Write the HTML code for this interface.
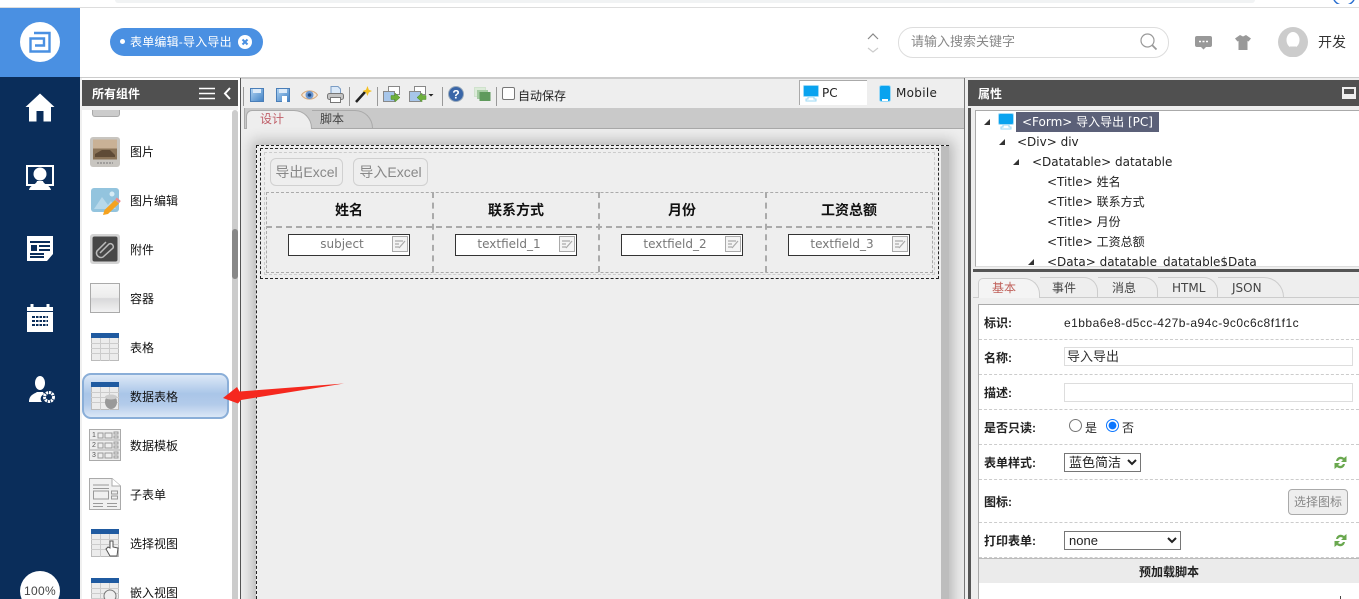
<!DOCTYPE html>
<html lang="zh"><head><meta charset="utf-8"><title>表单编辑</title>
<style>
html,body{margin:0;padding:0;width:1359px;height:599px;overflow:hidden;background:#fff}
body{position:relative;font:12px "Liberation Sans","Noto Sans CJK SC",sans-serif;color:#222}
.a,.l,.t{position:absolute}
.a svg{display:block}
.l{left:130px;line-height:16px;color:#111;white-space:nowrap;margin-top:1px}
.t{white-space:nowrap;line-height:16px}
.sep{position:absolute;top:87px;width:1px;height:19px;background:#999}
.th{position:absolute;top:202px;font-weight:bold;font-size:14px;color:#111;line-height:16px;text-align:center;width:166px}
.inp{position:absolute;top:234px;width:120px;height:20px;border:1px solid #333;background:#fff;color:#777;text-align:center;line-height:18px;box-sizing:content-box;font-family:"DejaVu Sans",sans-serif}
.inp span{display:block;width:106px}
.inp svg{position:absolute;right:1px;top:1px}
.lb{position:absolute;left:984px;font-weight:bold;color:#222;line-height:16px;white-space:nowrap}
.dl{position:absolute;left:979px;right:0;border-top:1px dashed #ccc;height:0}
.tr{position:absolute;white-space:nowrap;color:#222;line-height:16px;font-family:"DejaVu Sans","Noto Sans CJK SC",sans-serif}
.ar{position:absolute;width:0;height:0;border-left:6px solid transparent;border-bottom:6px solid #333}
.btn{position:absolute;top:158px;height:26px;border:1px solid #d0d0d0;border-radius:6px;color:#888;font-size:14px;line-height:26px;text-align:center;background:#eee}
.tab{position:absolute;top:277px;height:21px;line-height:20px;color:#444;border:1px solid #ccc;border-bottom:0;border-left:0;border-radius:0 14px 0 0;box-sizing:border-box;padding-left:14px;font-family:"DejaVu Sans","Noto Sans CJK SC",sans-serif}
</style></head><body>

<!-- top strip -->
<div class="a" style="left:115px;top:0;width:1140px;height:3px;background:#f1f3f4;border-radius:0 0 8px 8px"></div>
<div class="a" style="left:0;top:7px;width:1359px;height:1px;background:#ddd"></div>
<div class="a" style="left:1333px;top:0"><svg width="26" height="4"><path d="M1 0a12 12 0 0 0 20 0" fill="none" stroke="#2a6fd0" stroke-width="1.500"/></svg></div>

<!-- logo + nav -->
<div class="a" style="left:0;top:8px;width:80px;height:69px;background:#4a90e2"></div>
<div class="a" style="left:20px;top:22px;width:40px;height:40px;border-radius:50%;background:#fff"></div>
<div class="a" style="left:29px;top:31px"><svg width="22" height="22" fill="none" stroke="#4a90e2" stroke-width="2.400"><path d="M5 2H20.500V20.500H1.500V7.500H15V14.500H6"/></svg></div>
<div class="a" style="left:0;top:77px;width:80px;height:522px;background:#0a2d5a"></div>
<div class="a" style="left:25px;top:93px"><svg width="30" height="29" fill="#fff"><path d="M15 0.500 29.500 14H26V28.500H18.500V18H11.500V28.500H4V14H0.500Z"/></svg></div>
<div class="a" style="left:26px;top:165px"><svg width="28" height="26"><path d="M1 1H27V20H1Z" fill="none" stroke="#fff" stroke-width="2"/><circle cx="14" cy="9" r="6.500" fill="#fff"/><path d="M3 25c1-5 7-5 8-9h6c1 4 7 4 8 9Z" fill="#fff"/></svg></div>
<div class="a" style="left:27px;top:235px"><svg width="26" height="27"><path d="M0 1H26V19L20 26H0Z" fill="#fff"/><path d="M3 6H23V8H3ZM12 10H23V12H12ZM12 14H23V16H12ZM3 18H17V20H3ZM3 21H17V23H3Z" fill="#0a2d5a"/><rect x="4" y="10" width="6" height="6" fill="#0a2d5a"/></svg></div>
<div class="a" style="left:26px;top:303px"><svg width="28" height="29"><path d="M1 4H27V29H1Z" fill="#fff"/><path d="M6 1V7M22 1V7" stroke="#fff" stroke-width="3"/><path d="M1 8.500H27" stroke="#0a2d5a"/><path d="M6 13h16v2H6zM6 17h16v2H6zM6 21h16v2H6z" fill="#0a2d5a"/><path d="M9.500 12.500v11M13 12.500v11M16.500 12.500v11M20 12.500v11" stroke="#fff"/></svg></div>
<div class="a" style="left:28px;top:375px"><svg width="28" height="30" fill="#fff"><ellipse cx="12" cy="8" rx="5" ry="7"/><path d="M1 27c0-7 5-8 8-10h6l1 2c-4 2-4 6-2 8Z"/><circle cx="21" cy="22" r="4.500" fill="none" stroke="#fff" stroke-width="3" stroke-dasharray="2.200 .8"/></svg></div>
<div class="a" style="left:20px;top:571px;width:40px;height:40px;border-radius:50%;background:#fff;color:#444;text-align:center;line-height:41px;font-size:12px;letter-spacing:.3px">100%</div>

<!-- header -->
<div class="a" style="left:80px;top:77px;width:1279px;height:1px;background:#ccc"></div>
<div class="a" style="left:110px;top:28px;width:153px;height:28px;background:#4a90e2;border-radius:14px"></div>
<div class="a" style="left:120px;top:39px;width:5px;height:5px;border-radius:50%;background:#fff"></div>
<div class="t" style="left:130px;top:34px;color:#fff;letter-spacing:.2px">表单编辑-导入导出</div>
<div class="a" style="left:238px;top:35px;width:14px;height:14px;border-radius:50%;background:#fff"></div>
<div class="a" style="left:238px;top:35px"><svg width="14" height="14"><path d="M4.500 4.500 9.500 9.500M9.500 4.500 4.500 9.500" stroke="#4a90e2" stroke-width="2"/></svg></div>
<div class="a" style="left:866px;top:31px"><svg width="14" height="24" fill="none"><path d="M2 8 7 3 12 8" stroke="#888" stroke-width="1.200"/><path d="M2 17 7 21 12 17" stroke="#ccc" stroke-width="1.200"/></svg></div>
<div class="a" style="left:898px;top:27px;width:269px;height:29px;border:1px solid #ddd;border-radius:15px"></div>
<div class="t" style="left:911px;top:34px;color:#888;font-size:13px">请输入搜索关键字</div>
<div class="a" style="left:1140px;top:33px"><svg width="18" height="18" fill="none" stroke="#999" stroke-width="1.200"><circle cx="7.500" cy="7.500" r="6.500"/><path d="M12 12 16.500 16.500" stroke-width="1.800"/></svg></div>
<div class="a" style="left:1195px;top:36px"><svg width="17" height="14"><path d="M2 0H15a2 2 0 0 1 2 2V9a2 2 0 0 1-2 2H11L8.500 13.500 6 11H2a2 2 0 0 1-2-2V2a2 2 0 0 1 2-2Z" fill="#999"/><path d="M4 5.500h2M7.500 5.500h2M11 5.500h2" stroke="#fff" stroke-width="1.500"/></svg></div>
<div class="a" style="left:1235px;top:35px"><svg width="16" height="15"><path d="M5 0 8 1.500 11 0 16 3.500 13.500 6.500 12.500 6V15H3.500V6L2.500 6.500 0 3.500Z" fill="#999"/></svg></div>
<div class="a" style="left:1278px;top:27px"><svg width="30" height="30"><circle cx="15" cy="15" r="15" fill="#ccc"/><ellipse cx="15" cy="13" rx="6.500" ry="8" fill="#fff"/><path d="M12 19.500V22L5 26.500A15 15 0 0 0 25 26.500L18 22V19.500Z" fill="#ccc"/></svg></div>
<div class="t" style="left:1318px;top:34px;font-size:14px;color:#333">开发</div>

<!-- left component panel -->
<div class="a" style="left:80px;top:78px;width:160px;height:521px;background:#fff"></div>
<div class="a" style="left:80px;top:78px;width:2px;height:521px;background:#f0f0f0"></div>
<div class="a" style="left:82px;top:80px;width:156px;height:26px;background:#505050"></div>
<div class="a" style="left:82px;top:106px;width:156px;height:4px;background:#eee"></div>
<div class="t" style="left:92px;top:86px;color:#fff;font-weight:bold">所有组件</div>
<div class="a" style="left:199px;top:87px"><svg width="36" height="13" fill="none" stroke="#fff"><path d="M0 1.500H16M0 6.500H16M0 11.500H16" stroke-width="1.400"/><path d="M31 1 26 6.500 31 12" stroke-width="2"/></svg></div>
<div class="a" style="left:232px;top:110px;width:6px;height:489px;background:#ccc;border-radius:3px 3px 0 0"></div>
<div class="a" style="left:232px;top:229px;width:6px;height:50px;background:#888;border-radius:3px"></div>

<div class="a" style="left:92px;top:110px;width:28px;height:7px;background:#ccc;border:1px solid #aaa;border-top:0;box-sizing:border-box;border-radius:0 0 3px 3px"></div>
<!-- 图片 -->
<div class="a" style="left:90px;top:137px"><svg width="30" height="30"><rect width="30" height="30" rx="3" fill="#c8c5c0"/><rect x="3" y="2.500" width="24" height="20" fill="#8a7358"/><rect x="3" y="2.500" width="24" height="9" fill="#c9b196"/><path d="M5 17 12 13 20 13 25 18V20H5Z" fill="#5e4a36"/><path d="M7 26H23" stroke="#777" stroke-dasharray="2 1"/></svg></div>
<div class="l" style="top:143px">图片</div>
<!-- 图片编辑 -->
<div class="a" style="left:91px;top:188px"><svg width="30" height="28"><rect width="28" height="24" rx="3" fill="#93c4de"/><path d="M3 21 11 9 17 17 20 13 25 21Z" fill="#b7d8ea"/><circle cx="21" cy="6" r="2.500" fill="#d8ecf5"/><path d="M12 27 13.500 22 24 12 28 15.500 17 26Z" fill="#f5a21f"/><path d="M25 10.500 29 14" stroke="#e88" stroke-width="2.500"/></svg></div>
<div class="l" style="top:192px">图片编辑</div>
<!-- 附件 -->
<div class="a" style="left:90px;top:234px"><svg width="30" height="30"><rect width="30" height="30" rx="3" fill="#d4d4d4"/><rect x="2.500" y="2.500" width="25" height="25" rx="2" fill="#474747"/><path d="M10 19 19 10a3 3 0 0 1 4 4L13 23a4.500 4.500 0 0 1-6-6L16 8" fill="none" stroke="#bbb" stroke-width="1.500"/></svg></div>
<div class="l" style="top:241px">附件</div>
<!-- 容器 -->
<div class="a" style="left:90px;top:283px;width:30px;height:30px;box-sizing:border-box;border:1px solid #aaa;background:linear-gradient(#f6f6f6 0,#ececec 48%,#d8d8da 52%,#f2f2f2 100%)"></div>
<div class="l" style="top:290px">容器</div>
<!-- 表格 -->
<div class="a" style="left:91px;top:333px"><svg width="28" height="28"><use href="#tb"/></svg></div>
<svg width="0" height="0" style="position:absolute"><defs><g id="tb"><rect width="28" height="28" fill="#ececec"/><rect width="28" height="5" fill="#1f5aa0"/><path d="M.5 5V27.500H27.500V5" fill="none" stroke="#bbb"/><path d="M0 10.500H28M0 15.500H28M0 20.500H28M9.500 5V28M18.500 5V28" stroke="#ccc"/></g></defs></svg>
<div class="l" style="top:339px">表格</div>
<!-- 数据表格 selected -->
<div class="a" style="left:82px;top:373px;width:147px;height:46px;box-sizing:border-box;border:2px solid #8aaed8;border-radius:9px;background:linear-gradient(#dde9f7,#a9c5e8 45%,#b3cbea 70%,#dbe7f6)"></div>
<div class="a" style="left:91px;top:382px"><svg width="28" height="28"><use href="#tb"/><ellipse cx="20" cy="20" rx="6" ry="7" fill="#999"/><ellipse cx="20" cy="15" rx="6" ry="2.500" fill="#ccc"/></svg></div>
<div class="l" style="top:388px">数据表格</div>
<!-- 数据模板 -->
<div class="a" style="left:89px;top:429px"><svg width="32" height="32"><rect x=".5" y=".5" width="31" height="31" fill="#eee" stroke="#aaa"/><path d="M0 11H32M0 21H32" stroke="#aaa"/><g fill="none" stroke="#999"><path d="M9 4h5v5H9zM16 4h7v5h-7zM25 3h4v2h-4zM25 7h4v2h-4zM9 14h5v5H9zM16 14h7v5h-7zM25 13h4v2h-4zM25 17h4v2h-4zM9 24h5v5H9zM16 24h7v5h-7zM25 23h4v2h-4zM25 27h4v2h-4z"/></g></svg></div>
<div class="t" style="left:92px;top:431px;font-size:7px;line-height:10px;color:#555">1<br>2<br>3</div>
<div class="l" style="top:437px">数据模板</div>
<!-- 子表单 -->
<div class="a" style="left:89px;top:478px"><svg width="32" height="32"><path d="M.5.500H23L31.500 8V31.500H.5Z" fill="#f0f0f0" stroke="#aaa"/><path d="M23 .5V8H31.500" fill="#fff" stroke="#aaa"/><g fill="none" stroke="#999"><path d="M4 10.500H20M4 7H20M4 25.500H14M4 28.500H14M18 25.500H28M18 28.500H28"/><path d="M4.500 13h15v8h-15zM22.500 13h6v3h-6zM22.500 18h6v3h-6z" stroke-width="1"/></g></svg></div>
<div class="l" style="top:486px">子表单</div>
<!-- 选择视图 -->
<div class="a" style="left:91px;top:529px"><svg width="28" height="28"><use href="#tb"/><path d="M19 12v7l-2-1-2 2 4 7h7l1-8-5-1v-6Z" fill="#fff" stroke="#555"/></svg></div>
<div class="l" style="top:535px">选择视图</div>
<!-- 嵌入视图 -->
<div class="a" style="left:91px;top:578px"><svg width="28" height="28"><use href="#tb"/><circle cx="19" cy="18" r="6" fill="#eee" stroke="#777"/></svg></div>
<div class="l" style="top:584px">嵌入视图</div>

<!-- center -->
<div class="a" style="left:240px;top:78px;width:1px;height:521px;background:#555"></div>
<div class="a" style="left:241px;top:78px;width:724px;height:521px;background:#eee"></div>
<div class="a" style="left:241px;top:78px;width:724px;height:1px;background:#ccc"></div>
<div class="a" style="left:241px;top:108px;width:723px;height:20px;background:#c9c9c9;border-bottom:1px solid #aaa;box-sizing:content-box"></div>
<div class="a" style="left:241px;top:108px;width:3px;height:21px;background:#eee;border-right:1px solid #aaa"></div>

<!-- toolbar -->
<div class="sep" style="left:243px"></div>
<svg width="0" height="0" style="position:absolute"><defs><linearGradient id="bl" x2="1" y2="1"><stop offset="0" stop-color="#b4d6f4"/><stop offset="1" stop-color="#3f80c4"/></linearGradient></defs></svg>
<div class="a" style="left:250px;top:88px"><svg width="14" height="14"><rect x=".5" y=".5" width="13" height="13" fill="url(#bl)" stroke="#4a7eb8"/><rect x="3" y="1" width="8" height="4" fill="#dceaf8"/></svg></div>
<div class="a" style="left:276px;top:88px"><svg width="14" height="14"><rect x=".5" y=".5" width="13" height="13" fill="url(#bl)" stroke="#4a7eb8"/><rect x="3" y="1" width="8" height="4" fill="#dceaf8"/><rect x="6" y="8" width="5" height="6" fill="#fff"/></svg></div>
<div class="a" style="left:301px;top:88px"><svg width="17" height="14"><path d="M.5 7C4 1.500 13 1.500 16.500 7 13 12.500 4 12.500 .5 7Z" fill="#f3e6d8" stroke="#d8a878"/><circle cx="8.500" cy="7" r="4" fill="#6a96d0"/><circle cx="8.500" cy="7" r="1.800" fill="#234a80"/></svg></div>
<div class="a" style="left:327px;top:86px"><svg width="17" height="17"><path d="M4 .5H11L13.500 3V8H4Z" fill="#dbe9f8" stroke="#7a9cc4"/><rect x=".5" y="7.500" width="16" height="6" rx="2" fill="#c4c4c4" stroke="#777"/><rect x="3.500" y="11.500" width="10" height="5" fill="#fff" stroke="#777"/></svg></div>
<div class="sep" style="left:349px"></div>
<div class="a" style="left:355px;top:86px"><svg width="17" height="17"><path d="M1 16 10 6" stroke="#222" stroke-width="2.500"/><path d="M12.500 0 13.800 3.700 17 5 13.800 6.500 12.500 10 11 6.500 7.500 5 11 3.700Z" fill="#f4c020"/></svg></div>
<div class="sep" style="left:377px"></div>
<div class="a" style="left:383px;top:86px"><svg width="17" height="17"><rect x="5.500" y=".5" width="11" height="8" fill="#fff" stroke="#888"/><rect x=".5" y="5.500" width="11" height="10" fill="#a7c6ea" stroke="#888"/><path d="M8 9.500h4V7l5 4.500-5 4.500v-2.500H8Z" fill="#6eb03c" stroke="#4a8a2a" stroke-width=".5"/></svg></div>
<div class="a" style="left:409px;top:86px"><svg width="26" height="17"><rect x="5.500" y=".5" width="11" height="8" fill="#fff" stroke="#888"/><rect x=".5" y="5.500" width="11" height="10" fill="#a7c6ea" stroke="#888"/><path d="M17 9.500h-4V7l-5 4.500 5 4.500v-2.500h4Z" fill="#6eb03c" stroke="#4a8a2a" stroke-width=".5"/><path d="M19.500 8h5L22 10.500Z" fill="#222"/></svg></div>
<div class="sep" style="left:442px"></div>
<div class="a" style="left:448px;top:86px"><svg width="16" height="16"><circle cx="8" cy="8" r="7.500" fill="#3a66a8" stroke="#9ab"/><text x="8" y="12.500" font-family="Liberation Sans" font-size="12" font-weight="bold" text-anchor="middle" fill="#fff">?</text></svg></div>
<div class="a" style="left:474px;top:87px"><svg width="17" height="15"><rect x=".5" y=".5" width="11" height="9" fill="#dcebd9" stroke="#cfe2cc"/><rect x="3" y="3" width="11" height="9" fill="#a5cba2"/><rect x="5.500" y="5" width="11" height="9" fill="#5f9a5c"/></svg></div>
<div class="sep" style="left:496px"></div>
<div class="a" style="left:502px;top:87px;width:13px;height:13px;box-sizing:border-box;border:1px solid #777;border-radius:2px;background:#fff"></div>
<div class="t" style="left:518px;top:88px;color:#222">自动保存</div>

<div class="a" style="left:799px;top:80px;width:68px;height:25px;background:#fff;border-left:1px solid #aaa;border-top:1px solid #aaa;box-sizing:border-box"></div>
<div class="a" style="left:803px;top:85px"><svg width="16" height="17"><rect x=".5" y=".5" width="15" height="11" rx="1" fill="#09a3ef" stroke="#9ad8f6"/><path d="M5 12H11V14H13V16H3V14H5Z" fill="#fff" stroke="#9ad8f6"/></svg></div>
<div class="t" style="left:822px;top:85px;color:#222;font-family:'DejaVu Sans',sans-serif">PC</div>
<div class="a" style="left:879px;top:85px"><svg width="12" height="17"><rect x=".5" y=".5" width="11" height="16" rx="2" fill="#09a3ef" stroke="#9ad8f6"/><rect x="3" y="14" width="6" height="2" fill="#fff"/></svg></div>
<div class="t" style="left:896px;top:85px;color:#222;font-family:'DejaVu Sans',sans-serif;letter-spacing:.3px">Mobile</div>

<!-- design tabs -->
<div class="a" style="left:246px;top:110px;width:66px;height:19px;background:#eee;border:1px solid #aaa;border-bottom:0;border-radius:6px 18px 0 0;box-sizing:border-box"></div>
<div class="t" style="left:260px;top:111px;color:#c0606a">设计</div>
<div class="a" style="left:312px;top:110px;width:61px;height:18px;border:1px solid #aaa;border-bottom:0;border-left:0;border-radius:0 18px 0 0;box-sizing:border-box"></div>
<div class="t" style="left:320px;top:111px;color:#444">脚本</div>

<!-- canvas -->
<div class="a" style="left:256px;top:145px;width:693px;height:470px;background:#eee;box-shadow:0 0 13px 4px rgba(0,0,0,.24)"></div>
<div class="a" style="left:964px;top:78px;width:1px;height:521px;background:#777"></div>
<div class="a" style="left:941px;top:146px;width:8px;height:453px;background:#bdbdbd"></div>
<div class="a" style="left:256px;top:145px;width:693px;height:0;border-top:1px dashed #222"></div>
<div class="a" style="left:256px;top:145px;width:0;height:454px;border-left:1px dashed #222"></div>
<div class="a" style="left:260px;top:148px;width:677px;height:129px;border:1px dashed #222"></div>
<div class="a" style="left:264px;top:152px;width:669px;height:121px;border:1px dashed #ccc"></div>
<div class="btn" style="left:270px;width:71px">导出Excel</div>
<div class="btn" style="left:353px;width:73px">导入Excel</div>
<div class="a" style="left:266px;top:192px;width:665px;height:79px;border:1px dashed #aaa"></div>
<div class="a" style="left:266px;top:226px;width:666px;height:0;border-top:2px dashed #aaa"></div>
<div class="a" style="left:432px;top:192px;height:80px;border-left:2px dashed #aaa"></div>
<div class="a" style="left:598px;top:192px;height:80px;border-left:2px dashed #aaa"></div>
<div class="a" style="left:765px;top:192px;height:80px;border-left:2px dashed #aaa"></div>
<div class="th" style="left:266px">姓名</div>
<div class="th" style="left:433px">联系方式</div>
<div class="th" style="left:599px">月份</div>
<div class="th" style="left:766px">工资总额</div>
<div class="inp" style="left:288px"><span>subject</span><svg width="16" height="16"><rect x=".5" y=".5" width="15" height="15" fill="#f4f4f4" stroke="#aaa"/><path d="M3 5H11M3 8H7M3 11H7M7 12 13 5" stroke="#aaa" stroke-width="1.200"/></svg></div>
<div class="inp" style="left:455px"><span>textfield_1</span><svg width="16" height="16"><rect x=".5" y=".5" width="15" height="15" fill="#f4f4f4" stroke="#aaa"/><path d="M3 5H11M3 8H7M3 11H7M7 12 13 5" stroke="#aaa" stroke-width="1.200"/></svg></div>
<div class="inp" style="left:621px"><span>textfield_2</span><svg width="16" height="16"><rect x=".5" y=".5" width="15" height="15" fill="#f4f4f4" stroke="#aaa"/><path d="M3 5H11M3 8H7M3 11H7M7 12 13 5" stroke="#aaa" stroke-width="1.200"/></svg></div>
<div class="inp" style="left:788px"><span>textfield_3</span><svg width="16" height="16"><rect x=".5" y=".5" width="15" height="15" fill="#f4f4f4" stroke="#aaa"/><path d="M3 5H11M3 8H7M3 11H7M7 12 13 5" stroke="#aaa" stroke-width="1.200"/></svg></div>

<!-- red arrow -->
<div class="a" style="left:220px;top:380px"><svg width="126" height="26"><path d="M3 18 17 7 19.500 11.500 124 3.500 21 20 18 23.500Z" fill="#f5281e"/></svg></div>

<!-- right panel -->
<div class="a" style="left:965px;top:78px;width:394px;height:521px;background:#eee"></div>
<div class="a" style="left:968px;top:80px;width:391px;height:26px;background:#505050"></div>
<div class="t" style="left:978px;top:86px;color:#fff;font-weight:bold">属性</div>
<div class="a" style="left:1342px;top:87px;width:14px;height:12px;background:#eee"></div>
<div class="a" style="left:1344px;top:89px;width:10px;height:5px;background:#505050"></div>
<div class="a" style="left:968px;top:108px;width:3px;height:491px;background:#555"></div>
<div class="a" style="left:975px;top:110px;width:384px;height:157px;box-sizing:border-box;background:#fff;border:1px solid #aaa;border-right:0;border-bottom:1px solid #ddd"></div>
<div class="a" style="left:973px;top:269px;width:386px;height:3px;background:#555"></div>
<div class="ar" style="left:984px;top:119px"></div>
<div class="a" style="left:998px;top:113px"><svg width="17" height="18"><rect x=".5" y=".5" width="15" height="11" rx="1.500" fill="#09a3ef" stroke="#a8dcf6"/><path d="M5 12H11V14H13V16H3V14H5Z" fill="#fff" stroke="#9ad8f6"/></svg></div>
<div class="a" style="left:1016px;top:112px;width:143px;height:20px;background:#5b6078"></div>
<div class="tr" style="left:1022px;top:114px;color:#fff">&lt;Form&gt; 导入导出 [PC]</div>
<div class="ar" style="left:999px;top:139px"></div>
<div class="tr" style="left:1017px;top:134px">&lt;Div&gt; div</div>
<div class="ar" style="left:1013px;top:159px"></div>
<div class="tr" style="left:1032px;top:154px">&lt;Datatable&gt; datatable</div>
<div class="tr" style="left:1047px;top:174px">&lt;Title&gt; 姓名</div>
<div class="tr" style="left:1047px;top:194px">&lt;Title&gt; 联系方式</div>
<div class="tr" style="left:1047px;top:214px">&lt;Title&gt; 月份</div>
<div class="tr" style="left:1047px;top:234px">&lt;Title&gt; 工资总额</div>
<div class="a" style="left:976px;top:254px;width:383px;height:12px;overflow:hidden;background:#fff"><div class="tr" style="left:71px;top:0">&lt;Data&gt; datatable_datatable$Data</div></div>
<div class="ar" style="left:1028px;top:259px"></div>

<!-- property tabs -->
<div class="a" style="left:973px;top:297px;width:386px;height:1px;background:#ccc"></div>
<div class="a" style="left:978px;top:278px;width:62px;height:20px;box-sizing:border-box;background:#f4f4f4;border:1px solid #ccc;border-bottom:0;border-radius:5px 16px 0 0"></div>
<div class="tab" style="left:1040px;width:58px;padding-left:12px">事件</div>
<div class="tab" style="left:1098px;width:60px">消息</div>
<div class="tab" style="left:1158px;width:60px">HTML</div>
<div class="tab" style="left:1218px;width:66px;border-radius:0 20px 0 0">JSON</div>
<div class="t" style="left:992px;top:280px;color:#c0605a">基本</div>

<!-- properties -->
<div class="a" style="left:978px;top:304px;width:381px;height:295px;box-sizing:border-box;background:#fff;border-left:1px solid #aaa;border-top:1px solid #aaa"></div>
<div class="lb" style="top:315px">标识:</div>
<div class="t" style="left:1064px;top:315px;color:#222;letter-spacing:.47px">e1bba6e8-d5cc-427b-a94c-9c0c6c8f1f1c</div>
<div class="dl" style="top:339px"></div>
<div class="lb" style="top:350px">名称:</div>
<div class="a" style="left:1064px;top:347px;width:289px;height:19px;box-sizing:border-box;border:1px solid #ddd;padding-left:2px;line-height:18px;color:#333;font-size:13px">导入导出</div>
<div class="dl" style="top:374px"></div>
<div class="lb" style="top:385px">描述:</div>
<div class="a" style="left:1064px;top:383px;width:289px;height:19px;box-sizing:border-box;border:1px solid #ddd"></div>
<div class="dl" style="top:409px"></div>
<div class="lb" style="top:420px">是否只读:</div>
<input type="radio" name="r" style="position:absolute;left:1069px;top:419px;margin:0;width:13px;height:13px">
<div class="t" style="left:1085px;top:420px">是</div>
<input type="radio" name="r" checked style="position:absolute;left:1106px;top:419px;margin:0;width:13px;height:13px;accent-color:#0a75ff">
<div class="t" style="left:1122px;top:420px">否</div>
<div class="dl" style="top:444px"></div>
<div class="lb" style="top:455px">表单样式:</div>
<select style="position:absolute;left:1064px;top:453px;width:77px;height:19px;font:13px 'Liberation Sans','Noto Sans CJK SC',sans-serif;padding:0;background:#fff;color:#222"><option>蓝色简洁</option></select>
<div class="a" style="left:1334px;top:455px"><svg width="13" height="15" fill="#6aa84f"><path d="M2 6C3 1 8 1 10 3L12.500 1V7H7L9 5C7 3.500 5 4 4 6Z"/><path d="M11 9C10 14 5 14 3 12L.5 14V8H6L4 10C6 11.500 8 11 9 9Z"/></svg></div>
<div class="dl" style="top:479px"></div>
<div class="lb" style="top:494px">图标:</div>
<div class="a" style="left:1288px;top:489px;width:60px;height:26px;box-sizing:border-box;border:1px solid #aaa;border-radius:4px;background:#eee;color:#888;text-align:center;line-height:25px;font-size:12px">选择图标</div>
<div class="dl" style="top:522px"></div>
<div class="lb" style="top:533px">打印表单:</div>
<select style="position:absolute;left:1064px;top:531px;width:117px;height:19px;font:13px 'Liberation Sans','Noto Sans CJK SC',sans-serif;padding:0;background:#fff;color:#222"><option>none</option></select>
<div class="a" style="left:1334px;top:533px"><svg width="13" height="15" fill="#6aa84f"><path d="M2 6C3 1 8 1 10 3L12.500 1V7H7L9 5C7 3.500 5 4 4 6Z"/><path d="M11 9C10 14 5 14 3 12L.5 14V8H6L4 10C6 11.500 8 11 9 9Z"/></svg></div>
<div class="dl" style="top:557px"></div>
<div class="a" style="left:979px;top:558px;width:380px;height:25px;background:#ebebeb;border-top:1px solid #bbb;box-sizing:border-box;text-align:center;font-weight:bold;line-height:27px;color:#222">预加载脚本</div>
<div class="a" style="left:1340px;top:596px;width:1px;height:3px;background:#444"></div>
</body></html>
